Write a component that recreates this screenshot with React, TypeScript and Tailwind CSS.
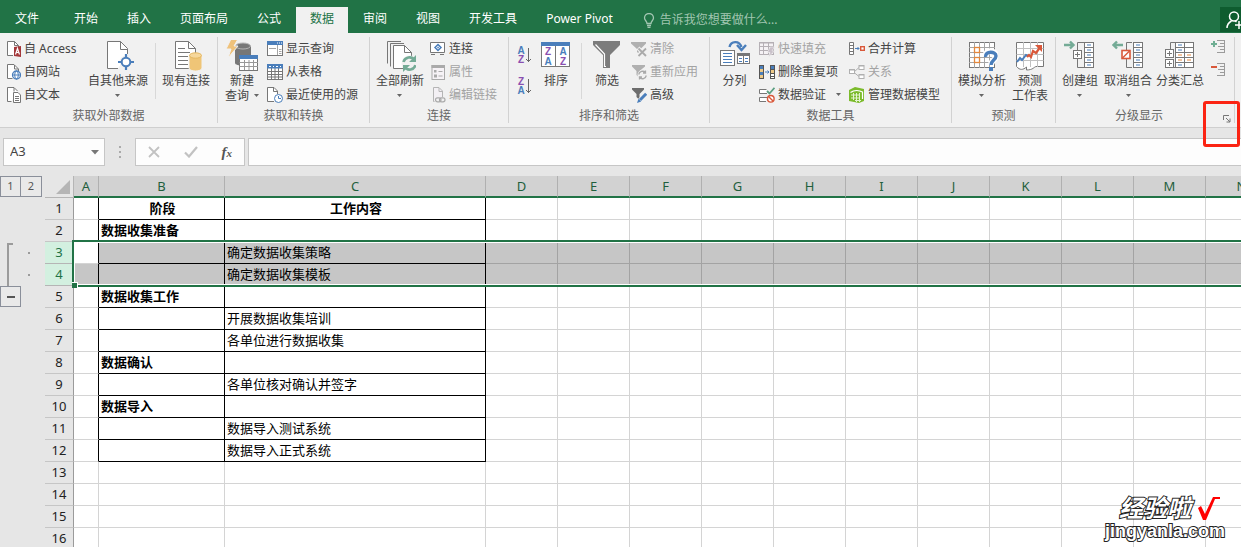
import React from "react";

const GRAY = "#777777";
const BLUE = "#4a7ebb";
const ORANGE = "#e3873c";
const RED = "#d9583a";
const GREEN = "#74ab96";
const PURPLE = "#8a4fb0";
const SAND = "#edc987";

type SvgProps = { size?: number; children: React.ReactNode };

function Svg({ size = 16, children }: SvgProps) {
  return (
    <svg
      width={size}
      height={size}
      viewBox={`0 0 ${size} ${size}`}
      fill="none"
      className="block shrink-0"
      aria-hidden="true"
    >
      {children}
    </svg>
  );
}

/* ---------- small icons ---------- */

const smallPage = "M7.5 14.5H2.5V.5H9L13.5 5V8";

const AccessIcon = () => (
  <Svg>
    <path d="M8 14.5H2.5V.5H9.5L13.5 4.5V6" fill="#fff" stroke={GRAY} />
    <path d="M9.5.5V4.5H13.5" stroke={GRAY} />
    <path d="M9 6L16 5V16L9 15Z" fill="#a4373a" />
    <path d="M10.5 13.5L12.5 7.5L14.5 13.5M11.2 11.5H13.8" stroke="#fff" strokeWidth="1.2" />
  </Svg>
);
const WebIcon = () => (
  <Svg>
    <path d={smallPage} fill="#fff" stroke={GRAY} />
    <path d="M9.5 1V5H13" stroke={GRAY} />
    <circle cx="11.5" cy="11" r="4" fill="#fff" stroke={BLUE} strokeWidth="1.3" />
    <ellipse cx="11.5" cy="11" rx="1.8" ry="4" stroke={BLUE} />
    <path d="M7.5 11H15.5" stroke={BLUE} />
  </Svg>
);
const TextIcon = () => (
  <Svg>
    <path d="M6.5 14.5H2.5V.5H9L12.5 4" fill="#fff" stroke={GRAY} />
    <path d="M9 1V4.5" stroke={GRAY} />
    <path d="M8.5 5.5H13L15.5 8V15.5H8.5Z" fill="#fff" stroke={GRAY} />
    <path d="M10 9.5H14M10 11.5H14M10 13.5H14" stroke={GRAY} />
  </Svg>
);
const ShowQueriesIcon = () => (
  <Svg>
    <rect x=".5" y=".5" width="15" height="14" fill="#fff" stroke={GRAY} />
    <rect x="0" y="0" width="16" height="4" fill={BLUE} />
    <path d="M10.5 4V14M2 7.5H9M12 8.5H14.5M12 10.5H14.5M12 12.5H14.5" stroke="#a5a5a5" />
    <path d="M10 2H11M12 2H13M14 2H15" stroke="#fff" />
  </Svg>
);
const FromTableIcon = () => (
  <Svg>
    <rect x=".5" y=".5" width="15" height="15" fill="#fff" stroke={GRAY} />
    <path d="M.5 7.5H15.5M.5 10.5H15.5M.5 13H15.5M4.5 4V15.5M8 4V15.5M11.5 4V15.5" stroke={GRAY} />
    <rect x="0" y="0" width="16" height="4.5" fill={BLUE} />
    <path d="M2 2.5H4M6 2.5H7M9 2.5H11M13 2.5H14" stroke="#fff" />
  </Svg>
);
const RecentIcon = () => (
  <Svg>
    <path d="M7 14.5H.5V.5H7L10.5 4V7" fill="#fff" stroke={GRAY} />
    <path d="M6.5 1V4.5H10" stroke={GRAY} />
    <circle cx="11.5" cy="11.5" r="4" fill="#fff" stroke={BLUE} />
    <path d="M11.5 9V11.5H14" stroke={BLUE} />
  </Svg>
);
const ConnectionIcon = () => (
  <Svg>
    <path d="M.5 1.5H14.5V11.5H.5Z" fill="#fff" stroke={GRAY} />
    <path d="M1 13.5H5M10 13.5H14" stroke={GRAY} />
    <path d="M8 3.5L11 6.5L8 9.5L5 6.5Z" stroke={BLUE} strokeWidth="1.5" />
    <rect x="7.3" y="5.8" width="1.5" height="1.5" fill={BLUE} />
  </Svg>
);
const PropertiesIcon = () => (
  <Svg>
    <rect x="2" y="1.5" width="12.5" height="14" fill="#f6f2f6" stroke="#aaa" />
    <rect x="1.5" y="1" width="13.5" height="3" fill="#aaa" />
    <rect x="4" y="6" width="2.5" height="2.5" fill="#aaa" />
    <rect x="4.5" y="11" width="2" height="2" stroke="#aaa" />
    <path d="M8.5 7.5H12.5M8.5 12H12.5" stroke="#aaa" />
  </Svg>
);
const EditLinksIcon = () => (
  <Svg>
    <path d="M4.5 14.5H3.5V.5H9L12.5 4V10" fill="#f3f0f4" stroke="#b5b5b5" />
    <path d="M9 1V4.5H12.5" stroke="#b5b5b5" />
    <rect x="5.5" y="10.8" width="5.5" height="4" rx="2" stroke="#aaa" strokeWidth="1.2" />
    <rect x="9.5" y="10.8" width="5.5" height="4" rx="2" stroke="#aaa" strokeWidth="1.2" />
  </Svg>
);
const ClearIcon = () => (
  <Svg>
    <path d="M0 1H15V2.5L9.5 8V14L6 11V8L0 2.5Z" fill="#b0b0b0" />
    <path d="M7 7L15 15M15 7L7 15" stroke="#f1f1f1" strokeWidth="4" />
    <path d="M7.5 7.5L15 15M15 7.5L7.5 15" stroke="#aaa" strokeWidth="1.8" />
  </Svg>
);
const ReapplyIcon = () => (
  <Svg>
    <path d="M1 1H14V2.5L8.5 7V14L5.5 11V7L1 2.5Z" fill="#b0b0b0" />
    <circle cx="11.5" cy="11" r="5" fill="#f1f1f1" />
    <path
      d="M7.7 10.5A4 4 0 0 1 14.5 8.5V6.5M14.5 9H12M15.3 11.5A4 4 0 0 1 8.5 13.5V15.5M8.5 13H11"
      stroke="#aaa"
      strokeWidth="1.3"
    />
  </Svg>
);
const AdvancedIcon = () => (
  <Svg>
    <path d="M1 1H13V2.5L8.5 7V13L5.5 10V7L1 2.5Z" fill="#6d6d6d" />
    <path d="M15.5 7L8 14.5" stroke="#f1f1f1" strokeWidth="5" />
    <path d="M15.2 6.8L9 13" stroke={BLUE} strokeWidth="3" />
    <path d="M6 16L7.5 11.8L10.2 14.5Z" fill={BLUE} />
  </Svg>
);
const FlashFillIcon = () => (
  <Svg>
    <rect x=".5" y="1.5" width="14" height="12" fill="#f5f2f5" stroke="#b5b0b5" />
    <path d="M0 2H15M.5 5.5H14.5M.5 9.5H14.5M4.5 2V13.5M9.5 2V13.5" stroke="#b5b0b5" />
    <path d="M11 6H15.5L13 10H15.5L9.5 16L11 11.5H8.5Z" fill="#c9c1ca" stroke="#f1f1f1" strokeWidth=".6" />
  </Svg>
);
const RemoveDuplicatesIcon = () => (
  <Svg>
    <rect x=".5" y="1.5" width="4" height="13" fill={SAND} stroke="#555" />
    <rect x="1" y="2" width="3" height="3" fill={BLUE} />
    <rect x="1" y="8" width="3" height="3" fill={BLUE} />
    <path d="M6 8H10M8.5 6.5L10 8L8.5 9.5" stroke={BLUE} />
    <rect x="11.5" y="1.5" width="4" height="13" fill="#fff" stroke="#555" />
    <rect x="12" y="2" width="3" height="3" fill={BLUE} />
    <rect x="12" y="6" width="3" height="3" fill={SAND} />
    <path d="M11.5 5.5H15.5M11.5 9.5H15.5M11.5 12.5H15.5" stroke="#555" />
  </Svg>
);
const ValidationIcon = () => (
  <Svg>
    <path d="M7.5 2.5H.5V6.5H8M8 10.5H.5V14.5H7" fill="#fff" stroke={GRAY} />
    <path d="M8 4L10.5 6.5L15.5 .8" stroke="#5b9f81" strokeWidth="1.8" />
    <circle cx="11.8" cy="11.8" r="3.3" fill="#fff" stroke={RED} strokeWidth="1.4" />
    <path d="M9.5 9.5L14 14" stroke={RED} strokeWidth="1.4" />
  </Svg>
);
const ConsolidateIcon = () => (
  <Svg>
    <path d="M.5 1.5H4.5V13.5H.5ZM.5 4.5H4.5M.5 7.5H4.5M.5 10.5H4.5" fill="#fff" stroke={GRAY} />
    <path d="M6 7.5H10M8.5 6L10 7.5L8.5 9" stroke={BLUE} />
    <rect x="11.7" y="5.7" width="3.6" height="3.6" fill="#fff" stroke={RED} strokeWidth="1.4" />
  </Svg>
);
const RelationsIcon = () => (
  <Svg>
    <path d="M5 8L10 3.5M5 8.5L10 12.5" stroke="#b0b0b0" />
    <rect x=".5" y="5.5" width="5" height="4" fill="#fff" stroke="#b0b0b0" />
    <rect x="10" y="1.5" width="5" height="4" fill="#fff" stroke="#b0b0b0" />
    <rect x="10" y="10.5" width="5" height="4" fill="#fff" stroke="#b0b0b0" />
    <path d="M.5 6H5.5M10 2H15M10 11H15" stroke="#b0b0b0" />
  </Svg>
);
const DataModelIcon = () => (
  <Svg>
    <path d="M0 3L6 0L15 2V14L10 16L0 14Z" fill="#7cbb2c" />
    <path d="M1.5 5.5C5 3 10 3 13.5 5V12" stroke="#fff" strokeWidth="1.2" />
    <path d="M2 8H11M2 11H11M4.5 6V13M7.500 6V15M10.500 6V15M6 13.500H12" stroke="#e4f3cf" />
  </Svg>
);
const ShowDetailIcon = () => (
  <Svg>
    <path d="M0 5H6M3 2V8" stroke="#6fae93" strokeWidth="2" />
    <path d="M6 1.5H14M9 4.5H14M7 7.5H14M9 10.5H14M6 13.5H14" stroke="#9b9b9b" />
    <path d="M13.5 1V14" stroke="#9b9b9b" />
  </Svg>
);
const HideDetailIcon = () => (
  <Svg>
    <path d="M0 5H6" stroke={RED} strokeWidth="2" />
    <path d="M6 1.5H14M9 4.5H14M7 7.5H14M9 10.5H14M6 13.5H14" stroke="#9b9b9b" />
    <path d="M13.5 1V14" stroke="#9b9b9b" />
  </Svg>
);

type LetterProps = { x: number; y: number; color: string; children: string };

function Letter({ x, y, color, children }: LetterProps) {
  return (
    <text
      x={x}
      y={y}
      textAnchor="middle"
      fill={color}
      className="font-['Liberation_Sans',sans-serif] text-[10px] font-bold"
    >
      {children}
    </text>
  );
}

function SortIcon({ descending = false }: { descending?: boolean }) {
  return (
    <svg width="16" height="20" viewBox="0 0 16 20" className="block" aria-hidden="true">
      <Letter x={4} y={9} color={descending ? PURPLE : BLUE}>
        {descending ? "Z" : "A"}
      </Letter>
      <Letter x={4} y={18} color={descending ? BLUE : PURPLE}>
        {descending ? "A" : "Z"}
      </Letter>
      <path d="M11.5 3V17M9 14L11.5 16.5L14 14" fill="none" stroke="#666" />
    </svg>
  );
}

/* ---------- large icons ---------- */

const OtherSourcesIcon = () => (
  <Svg size={32}>
    <path d="M16 28.5H5.5V1.5H18.5L25.5 8.5V14" fill="#fff" stroke={GRAY} />
    <path d="M18.5 1.5V9.5H25.5" stroke={GRAY} />
    <circle cx="24" cy="22" r="6.5" fill="#f1f1f1" />
    <circle cx="24" cy="22" r="4.3" fill="#fff" stroke={BLUE} strokeWidth="2" />
    <path d="M24 14V18M24 26V30M16 22H20M28 22H32" stroke={BLUE} strokeWidth="2.2" />
  </Svg>
);
const ExistingIcon = () => (
  <Svg size={32}>
    <path d="M5.5 1.5H18.5L25.5 8.5V28.5H5.5Z" fill="#fff" stroke={GRAY} />
    <path
      d="M18.5 1.5V8.5H25.5M8 8.5H15M8 12.5H20M8 16.5H18M8 20.5H18M8 24.5H18"
      stroke={GRAY}
    />
    <path d="M19 15.5V28C19 32 32 32 32 28V15.5Z" fill="#efc577" stroke="#f1f1f1" />
    <ellipse cx="25.5" cy="15.5" rx="6" ry="2.7" fill="#f6d79b" stroke="#e5b760" />
  </Svg>
);
const NewQueryIcon = () => (
  <Svg size={32}>
    <path d="M9 6V23C9 26.5 25 26.5 25 23V6Z" fill="#777" />
    <ellipse cx="17" cy="6" rx="7.5" ry="3" fill="#777" stroke="#b5b5b5" />
    <path d="M5 -1H12L8 6H12L2 18L5 9H0Z" fill="#efc27b" stroke="#f1f1f1" />
    <rect x="13.5" y="15.5" width="18" height="15" fill="#fff" stroke={GRAY} />
    <path d="M13.5 22.5H32M13.5 26.5H32M18.5 20V30M23 20V30M27.5 20V30" stroke="#999" />
    <rect x="13" y="15" width="19" height="4" fill={BLUE} />
  </Svg>
);
const RefreshAllIcon = () => (
  <Svg size={32}>
    <path d="M3.5 23.5V1.5H17M6.5 26.5V3.5H20" stroke={GRAY} />
    <path d="M9.5 28.5V5.5H20.5L27.5 12.5V28.5Z" fill="#fff" stroke={GRAY} />
    <path d="M20.5 5.5V12.5H27.5" stroke={GRAY} />
    <circle cx="25.5" cy="23.5" r="8" fill="#f1f1f1" />
    <path
      d="M19.5 22A6.200 6.200 0 0 1 30.5 20M31.5 25A6.200 6.200 0 0 1 20.5 27"
      stroke={GREEN}
      strokeWidth="2.6"
    />
    <path d="M32 15V22H25ZM19 32V25H26Z" fill={GREEN} />
  </Svg>
);
const SortDialogIcon = () => (
  <Svg size={32}>
    <rect x="1.5" y="2.5" width="28" height="24" fill="#fff" stroke={GRAY} />
    <rect x="1" y="2" width="29" height="4" fill={BLUE} />
    <path d="M15.5 6V26" stroke={GRAY} />
    <Letter x={8} y={15} color={PURPLE}>
      Z
    </Letter>
    <Letter x={8} y={25} color={BLUE}>
      A
    </Letter>
    <Letter x={23} y={15} color={BLUE}>
      A
    </Letter>
    <Letter x={23} y={25} color={PURPLE}>
      Z
    </Letter>
  </Svg>
);
const FilterIcon = () => (
  <Svg size={32}>
    <path d="M2 1H29V5L19 15V28H12V15L2 5Z" fill="#7c7c7c" />
    <path d="M4.5 4.5L13.500 14V26.500H15" stroke="#fff" strokeWidth="1.2" />
  </Svg>
);
const TextToColumnsIcon = () => (
  <Svg size={32}>
    <rect x="1.5" y="10.5" width="14" height="15" fill="#fff" stroke={GRAY} />
    <path d="M4 13.5H13M4 16.5H13M4 19.5H13M4 22.5H13" stroke={BLUE} />
    <rect x="18.5" y="13.5" width="12" height="10" fill="#fff" stroke={GRAY} />
    <path d="M18 14.5H31" stroke={GRAY} strokeWidth="3" />
    <path d="M24.5 14V24" stroke={GRAY} />
    <path d="M20 18.5H23M20 21.5H23M26 18.5H29M26 21.5H29" stroke={BLUE} />
    <path d="M10.5 7C12 1 20 0 22.5 7" stroke={BLUE} strokeWidth="2.4" />
    <path d="M18 5L22.5 10L27 5" stroke={BLUE} strokeWidth="2.4" />
  </Svg>
);
const WhatIfIcon = () => (
  <Svg size={32}>
    <rect x="3.5" y="2.5" width="25" height="25" fill="#fff" stroke={GRAY} />
    <path
      d="M3 7.5H29M3 12.5H29M3 17.5H29M3 22.5H29M8.5 2V28M13.5 2V28M18.5 2V28M23.5 2V28"
      stroke="#a5a5a5"
    />
    <rect x="8.5" y="7.5" width="5" height="5" fill="#fff" stroke={ORANGE} strokeWidth="1.3" />
    <rect x="8.5" y="17.5" width="5" height="5" fill="#fff" stroke={ORANGE} strokeWidth="1.3" />
    <path d="M19 17C19 9 30 10 30 16C30 20 25 20 25 25" stroke="#fff" strokeWidth="6" />
    <path d="M19.5 17C19 10.500 30 11 30 16C30 20 25 20 25 25" stroke={BLUE} strokeWidth="3.4" />
    <rect x="23" y="27" width="4" height="4" fill={BLUE} />
  </Svg>
);
const ForecastIcon = () => (
  <Svg size={32}>
    <path
      d="M2.5 2.5H29.5V26.5H22C20 27 19 30 12.5 30V27C9 30 6 30.500 2.5 26.5Z"
      fill="#fff"
      stroke={GRAY}
    />
    <path d="M2.5 8.5H29.5M2.5 14.5H29.5M2.5 20.5H29.5M9.5 2V27M16.5 2V27M23.5 2V27" stroke="#c0c0c0" />
    <path d="M3 22L6 18L8 20L12 15L14 16" stroke={BLUE} strokeWidth="2" />
    <path d="M13 17L15 15L17 17L19 11L22 13L27 6" stroke={RED} strokeWidth="2.2" />
    <path d="M21 5H28V12Z" fill={RED} />
  </Svg>
);

function OutlineGrid({ x, two = false }: { x: number; two?: boolean }) {
  const right = x + (two ? 19 : 10);
  return (
    <>
      <rect x={x + 0.5} y="2.5" width={two ? 18 : 9} height="25" fill="#fff" stroke={GRAY} />
      <path
        d={`M${x} 7.5H${right}M${x} 12.5H${right}M${x} 17.5H${right}M${x} 22.5H${right}`}
        stroke={GRAY}
      />
      {two && <path d={`M${x + 9.5} 2V28`} stroke={GRAY} />}
      <path d={`M${x + 3} 5H${x + 7}M${x + 3} 10H${x + 7}M${x + 3} 25H${x + 7}`} stroke={BLUE} />
      <path d={`M${x + 3} 15H${x + 7}M${x + 3} 20H${x + 7}`} stroke={two ? ORANGE : BLUE} />
      {two && <path d={`M${x + 12} 15H${x + 16}M${x + 12} 20H${x + 16}`} stroke={ORANGE} />}
    </>
  );
}
const GroupIcon = () => (
  <Svg size={32}>
    <path d="M0 5H10M6 1.5L9.5 5L6 8.5" stroke={GREEN} strokeWidth="2.4" />
    <path d="M20 2.5H13.5V10M13.5 19V27.5H20" stroke={GRAY} />
    <rect x="9.5" y="10.5" width="8" height="8" fill="#fff" stroke={GRAY} />
    <path d="M11 14.5H16M13.5 12V17" stroke={GRAY} />
    <OutlineGrid x={20} />
  </Svg>
);
const UngroupIcon = () => (
  <Svg size={32}>
    <path d="M1 5H11M5 1.5L1.5 5L5 8.5" stroke={GREEN} strokeWidth="2.4" />
    <path d="M20 2.5H14.5V10M14.5 19V27.5H20" stroke={GRAY} />
    <rect x="10" y="10.5" width="8" height="8" fill="#fff" stroke={RED} strokeWidth="1.6" />
    <path d="M10.5 18L17.5 11" stroke={RED} strokeWidth="1.4" />
    <OutlineGrid x={21} />
  </Svg>
);
const SubtotalIcon = () => (
  <Svg size={32}>
    <path d="M11 2.5H6.5V9M6.5 25V27.5H11" stroke={GRAY} />
    <rect x="1.5" y="9.5" width="8" height="8" fill="#fff" stroke={GRAY} />
    <rect x="1.5" y="19.5" width="8" height="8" fill="#fff" stroke={GRAY} />
    <path d="M3 13.5H8M5.5 11V16M3 23.5H8M5.5 21V26" stroke={GRAY} />
    <OutlineGrid x={11} two />
  </Svg>
);

/* ---------- ribbon building blocks ---------- */

const Arrow = () => (
  <svg width="5" height="3" viewBox="0 0 5 3" className="block shrink-0" aria-hidden="true">
    <path d="M0 0H5L2.5 3Z" fill="#666" />
  </svg>
);

type LargeProps = {
  icon: React.ReactNode;
  lines: string[];
  arrow?: boolean;
  width: string;
};

function Large({ icon, lines, arrow, width }: LargeProps) {
  return (
    <button type="button" className={`flex shrink-0 flex-col items-center gap-px pt-[3px] ${width}`}>
      {icon}
      <span className="flex flex-col items-center">
        {lines.map((line, i) => (
          <span
            key={line}
            className="flex h-[15px] items-center gap-[5px] whitespace-nowrap leading-[15px] text-[#444]"
          >
            {line}
            {arrow && lines.length > 1 && i === lines.length - 1 && <Arrow />}
          </span>
        ))}
        {arrow && lines.length === 1 && (
          <span className="flex h-[15px] items-center">
            <Arrow />
          </span>
        )}
      </span>
    </button>
  );
}

type SmallItem = { icon: React.ReactNode; text: string; disabled?: boolean; arrow?: boolean };

function SmallColumn({ items, width = "" }: { items: SmallItem[]; width?: string }) {
  return (
    <div className={`flex shrink-0 flex-col ${width}`}>
      {items.map((item) => (
        <button
          key={item.text}
          type="button"
          disabled={item.disabled}
          className="flex h-[23px] items-center gap-[3px] whitespace-nowrap text-[#444] disabled:text-[#a3a3a3]"
        >
          {item.icon}
          {item.text}
          {item.arrow && (
            <span className="pl-[7px]">
              <Arrow />
            </span>
          )}
        </button>
      ))}
    </div>
  );
}

const Divider = () => <div className="mx-[2px] mt-[6px] h-14 w-px shrink-0 bg-[#d8d8d8]" />;

type GroupProps = { label: string; width: string; launcher?: boolean; children: React.ReactNode };

function Group({ label, width, launcher, children }: GroupProps) {
  return (
    <section
      aria-label={label}
      className={`flex h-[86px] shrink-0 flex-col border-r border-[#d2d2d2] ${width}`}
    >
      <div className="flex h-[72px]">{children}</div>
      <div className="flex h-[14px] items-center">
        <span className="flex-1 text-center leading-[14px] text-[#666]">{label}</span>
        {launcher && (
          <button type="button" aria-label="分级显示设置" className="mr-[2px] pt-1">
            <svg width="10" height="9" viewBox="0 0 10 9" fill="none" className="block">
              <path d="M1.5 6V1.5H7M4 4L8 8M8 4.5V8H4.5" stroke="#777" />
            </svg>
          </button>
        )}
      </div>
    </section>
  );
}

/* ---------- page ---------- */

const tabs = ["开始", "插入", "页面布局", "公式", "数据", "审阅", "视图", "开发工具", "Power Pivot"];

function TitleTabs() {
  return (
    <header className="flex h-[33px] shrink-0 items-end overflow-hidden bg-[#217346] text-white">
      <button type="button" className="mr-[6px] h-[26px] w-[54px] shrink-0 pb-[2px]">
        文件
      </button>
      <nav className="flex shrink-0 gap-px">
        {tabs.map((tab) => (
          <button
            key={tab}
            type="button"
            className={
              tab === "数据"
                ? "h-[26px] bg-[#f1f1f1] px-[14px] pb-[2px] text-[#217346]"
                : "h-[26px] px-[14px] pb-[2px]"
            }
          >
            {tab}
          </button>
        ))}
      </nav>
      <button type="button" className="ml-4 flex h-[26px] shrink-0 items-center gap-[5px] text-[#a2c6b1]">
        <svg width="12" height="15" viewBox="0 0 12 15" fill="none" aria-hidden="true">
          <path
            d="M4 10.5C4 8 1.5 7.5 1.5 5A4.500 4.500 0 0 1 10.5 5C10.5 7.5 8 8 8 10.5ZM4 12.5H8M4.5 14.5H7.5"
            stroke="#a2c6b1"
            strokeWidth="1.3"
          />
        </svg>
        告诉我您想要做什么...
      </button>
      <button
        type="button"
        aria-label="共享"
        className="mb-px ml-auto h-[25px] w-[21px] shrink-0 overflow-hidden bg-[#0e5c2f] pl-[6px]"
      >
        <svg width="20" height="20" viewBox="0 0 20 20" fill="none" className="block">
          <circle cx="8" cy="6.5" r="4.5" stroke="#fff" strokeWidth="1.5" />
          <path d="M1 18C1 14 3 12.5 5.5 11M9 11L10.5 12M9 15H17M13 11V19" stroke="#fff" strokeWidth="1.5" />
        </svg>
      </button>
    </header>
  );
}

function Ribbon() {
  return (
    <div className="flex h-[95px] shrink-0 border-b border-[#cfcfcf] bg-[#f1f1f1] pt-1">
      <Group label="获取外部数据" width="w-[218px]">
        <SmallColumn
          width="w-[83px] pl-[5px]"
          items={[
            { icon: <AccessIcon />, text: "自 Access" },
            { icon: <WebIcon />, text: "自网站" },
            { icon: <TextIcon />, text: "自文本" },
          ]}
        />
        <Large icon={<OtherSourcesIcon />} lines={["自其他来源"]} arrow width="w-[70px]" />
        <Divider />
        <Large icon={<ExistingIcon />} lines={["现有连接"]} width="w-14" />
      </Group>

      <Group label="获取和转换" width="w-[152px]">
        <Large icon={<NewQueryIcon />} lines={["新建", "查询"]} arrow width="w-12" />
        <SmallColumn
          width="pl-px"
          items={[
            { icon: <ShowQueriesIcon />, text: "显示查询" },
            { icon: <FromTableIcon />, text: "从表格" },
            { icon: <RecentIcon />, text: "最近使用的源" },
          ]}
        />
      </Group>

      <Group label="连接" width="w-[139px]">
        <Large icon={<RefreshAllIcon />} lines={["全部刷新"]} arrow width="w-[60px]" />
        <SmallColumn
          items={[
            { icon: <ConnectionIcon />, text: "连接" },
            { icon: <PropertiesIcon />, text: "属性", disabled: true },
            { icon: <EditLinksIcon />, text: "编辑链接", disabled: true },
          ]}
        />
      </Group>

      <Group label="排序和筛选" width="w-[201px]">
        <div className="flex flex-col gap-[11px] pt-2 pl-2">
          <button type="button" aria-label="升序">
            <SortIcon />
          </button>
          <button type="button" aria-label="降序">
            <SortIcon descending />
          </button>
        </div>
        <Large icon={<SortDialogIcon />} lines={["排序"]} width="w-[46px]" />
        <Divider />
        <Large icon={<FilterIcon />} lines={["筛选"]} width="w-[46px]" />
        <SmallColumn
          width="pl-px"
          items={[
            { icon: <ClearIcon />, text: "清除", disabled: true },
            { icon: <ReapplyIcon />, text: "重新应用", disabled: true },
            { icon: <AdvancedIcon />, text: "高级" },
          ]}
        />
      </Group>

      <Group label="数据工具" width="w-[242px]">
        <Large icon={<TextToColumnsIcon />} lines={["分列"]} width="w-[49px]" />
        <SmallColumn
          width="w-[90px]"
          items={[
            { icon: <FlashFillIcon />, text: "快速填充", disabled: true },
            { icon: <RemoveDuplicatesIcon />, text: "删除重复项" },
            { icon: <ValidationIcon />, text: "数据验证", arrow: true },
          ]}
        />
        <SmallColumn
          items={[
            { icon: <ConsolidateIcon />, text: "合并计算" },
            { icon: <RelationsIcon />, text: "关系", disabled: true },
            { icon: <DataModelIcon />, text: "管理数据模型" },
          ]}
        />
      </Group>

      <Group label="预测" width="w-[104px]">
        <Large icon={<WhatIfIcon />} lines={["模拟分析"]} arrow width="w-[60px]" />
        <Large icon={<ForecastIcon />} lines={["预测", "工作表"]} width="w-9" />
      </Group>

      <Group label="分级显示" width="w-[179px]" launcher>
        <Large icon={<GroupIcon />} lines={["创建组"]} arrow width="w-12" />
        <Large icon={<UngroupIcon />} lines={["取消组合"]} arrow width="w-12" />
        <Large icon={<SubtotalIcon />} lines={["分类汇总"]} width="w-14" />
        <div className="flex flex-col gap-[7px] pt-[2px] pl-[3px]">
          <button type="button" aria-label="显示明细数据">
            <ShowDetailIcon />
          </button>
          <button type="button" aria-label="隐藏明细数据">
            <HideDetailIcon />
          </button>
        </div>
      </Group>
    </div>
  );
}

function FormulaBar() {
  return (
    <div className="flex h-12 shrink-0 items-start bg-[#e6e6e6] pt-[10px] pl-[3px]">
      <div className="flex h-7 w-[102px] shrink-0 items-center border border-[#c6c6c6] bg-[#fdfdfd] pr-[5px]">
        <input
          aria-label="名称框"
          defaultValue="A3"
          className="w-0 flex-1 bg-transparent pl-[6px] text-[13px] text-[#444] outline-none"
        />
        <svg width="8" height="5" viewBox="0 0 8 5" aria-hidden="true">
          <path d="M0 0H8L4 4.5Z" fill="#777" />
        </svg>
      </div>
      <div className="flex h-7 w-[30px] shrink-0 flex-col items-center justify-center gap-[3px]">
        <i className="size-[2px] bg-[#aaa]" />
        <i className="size-[2px] bg-[#aaa]" />
        <i className="size-[2px] bg-[#aaa]" />
      </div>
      <div className="flex h-7 w-[110px] shrink-0 items-center justify-around border border-[#c6c6c6] bg-[#fdfdfd]">
        <button type="button" aria-label="取消">
          <svg width="12" height="12" viewBox="0 0 12 12" fill="none">
            <path d="M1 1L11 11M11 1L1 11" stroke="#c2c2c2" strokeWidth="1.8" />
          </svg>
        </button>
        <button type="button" aria-label="输入">
          <svg width="14" height="12" viewBox="0 0 14 12" fill="none">
            <path d="M1 6.5L5 10.5L13 1" stroke="#c2c2c2" strokeWidth="2.2" />
          </svg>
        </button>
        <button
          type="button"
          className="font-['Liberation_Serif',serif] text-[15px] leading-none font-bold text-[#555] italic"
        >
          f<span className="text-[11px]">x</span>
        </button>
      </div>
      <input
        aria-label="编辑栏"
        className="ml-[3px] h-7 min-w-0 flex-1 border border-r-0 border-[#c6c6c6] bg-[#fdfdfd] px-2 outline-none"
      />
    </div>
  );
}

const columns = ["A", "B", "C", "D", "E", "F", "G", "H", "I", "J", "K", "L", "M", "N"];

type Row = { stage?: string; work?: string };

const data: Row[] = [
  { stage: "阶段", work: "工作内容" },
  { stage: "数据收集准备" },
  { work: "确定数据收集策略" },
  { work: "确定数据收集模板" },
  { stage: "数据收集工作" },
  { work: "开展数据收集培训" },
  { work: "各单位进行数据收集" },
  { stage: "数据确认" },
  { work: "各单位核对确认并签字" },
  { stage: "数据导入" },
  { work: "数据导入测试系统" },
  { work: "数据导入正式系统" },
  {},
  {},
  {},
  {},
];

function cellClass(row: number, col: string) {
  const selected = row === 3 || row === 4;
  const inTable = row <= 12;
  const framed = inTable && (col === "B" || col === "C");
  const parts = ["h-[22px] overflow-hidden whitespace-nowrap border-r border-b p-0 pl-[2px]"];
  parts.push(selected && !(row === 3 && col === "A") ? "bg-[#c6c6c6]" : "bg-white");
  if (framed) parts.push("border-black");
  else if (inTable && col === "A") parts.push("border-r-black border-b-[#d4d4d4]");
  else if (selected) parts.push("border-[#a3a3a3]");
  else parts.push("border-[#d4d4d4]");
  if (row === 1) parts.push("text-center font-bold");
  else if (col === "B") parts.push("text-left font-bold");
  else parts.push("text-left");
  return parts.join(" ");
}

function OutlineGutter() {
  return (
    <aside className="w-[45px] shrink-0 text-[11px] text-[#555]">
      <div className="flex">
        <button type="button" className="size-[21px] border border-[#8a8f9a] bg-[#e9e9e9]">
          1
        </button>
        <button type="button" className="size-[21px] border border-l-0 border-[#8a8f9a] bg-[#e9e9e9]">
          2
        </button>
      </div>
      <div className="mt-[46px] flex h-[43px] pl-[7px]">
        <div className="w-[6px] border-t-2 border-l-2 border-[#9b9b9b]" />
        <div className="flex flex-col gap-5 pt-[9px] pl-[15px]">
          <i className="size-[2px] bg-[#9b9b9b]" />
          <i className="size-[2px] bg-[#9b9b9b]" />
        </div>
      </div>
      <button
        type="button"
        aria-label="折叠"
        className="flex size-[21px] items-center justify-center border border-[#8a8f9a] bg-[#e9e9e9]"
      >
        <i className="h-[2px] w-2 bg-[#555]" />
      </button>
    </aside>
  );
}

function Sheet() {
  return (
    <main className="flex min-h-0 flex-1 overflow-hidden bg-[#e6e6e6]">
      <OutlineGutter />
      <div className="relative min-w-0 flex-1 overflow-hidden">
        <table className="w-[1233px] min-w-full table-fixed border-separate border-spacing-0 text-[13px] leading-[21px] text-black">
          <colgroup>
            <col className="w-[29px]" />
            <col className="w-[25px]" />
            <col className="w-[126px]" />
            <col className="w-[261px]" />
            {columns.slice(3).map((c) => (
              <col key={c} className="w-[72px]" />
            ))}
          </colgroup>
          <thead>
            <tr>
              <th className="h-[22px] border-r border-b border-[#b5b5b5] p-0">
                <svg
                  width="14"
                  height="14"
                  viewBox="0 0 14 14"
                  className="mr-[3px] ml-auto block"
                  aria-hidden="true"
                >
                  <path d="M14 0V14H0Z" fill="#b5b5b5" />
                </svg>
              </th>
              {columns.map((c) => (
                <th
                  key={c}
                  scope="col"
                  className="h-[22px] border-r border-b-2 border-r-[#b0b0b0] border-b-[#217346] bg-[#d2d2d2] p-0 leading-5 font-normal text-[#1f5f3d]"
                >
                  {c}
                </th>
              ))}
            </tr>
          </thead>
          <tbody>
            {data.map((row, i) => {
              const n = i + 1;
              return (
                <tr key={n}>
                  <th
                    scope="row"
                    className={
                      n === 3 || n === 4
                        ? "h-[22px] border-r border-b border-[#b5b5b5] bg-[#d3f0e0] p-0 font-normal text-[#217346]"
                        : "h-[22px] border-r border-b border-r-[#9b9b9b] border-b-[#c6c6c6] p-0 font-normal text-[#222]"
                    }
                  >
                    {n}
                  </th>
                  {columns.map((c) => (
                    <td key={c} className={cellClass(n, c)}>
                      {c === "B" ? row.stage : c === "C" ? row.work : null}
                    </td>
                  ))}
                </tr>
              );
            })}
          </tbody>
        </table>
        <div className="pointer-events-none absolute top-16 -right-1 left-[27px] h-[47px] border-2 border-[#217346]">
          <div className="h-full border border-white" />
          <i className="absolute -bottom-[3px] -left-[2px] size-[6px] border-t border-r border-white bg-[#217346]" />
        </div>
      </div>
    </main>
  );
}

function Watermark() {
  return (
    <div className="pointer-events-none absolute right-4 bottom-[6px] flex flex-col items-end font-bold text-white">
      <div className="flex items-center gap-[5px] pr-1">
        <span className="text-2xl leading-[26px] italic [-webkit-text-stroke:2px_#222] [paint-order:stroke_fill]">
          经验啦
        </span>
        <svg width="25" height="26" viewBox="0 0 25 26" fill="none" aria-hidden="true">
          <path d="M2 13L5 11L9 19L17 2H24V4H19L10 25H7Z" fill="#f00" />
        </svg>
      </div>
      <span className="font-['Liberation_Sans',sans-serif] text-lg leading-5 [-webkit-text-stroke:2px_#222] [paint-order:stroke_fill]">
        jingyanla.com
      </span>
    </div>
  );
}

export default function App() {
  return (
    <div className="relative flex h-screen flex-col overflow-hidden bg-[#e6e6e6] font-['Noto_Sans','Noto_Sans_CJK_SC',sans-serif] text-xs">
      <TitleTabs />
      <Ribbon />
      <FormulaBar />
      <Sheet />
      <div className="pointer-events-none absolute top-[101px] left-[1203px] h-[46px] w-[37px] rounded-[3px] border-3 border-[#fb2413]" />
      <Watermark />
    </div>
  );
}
